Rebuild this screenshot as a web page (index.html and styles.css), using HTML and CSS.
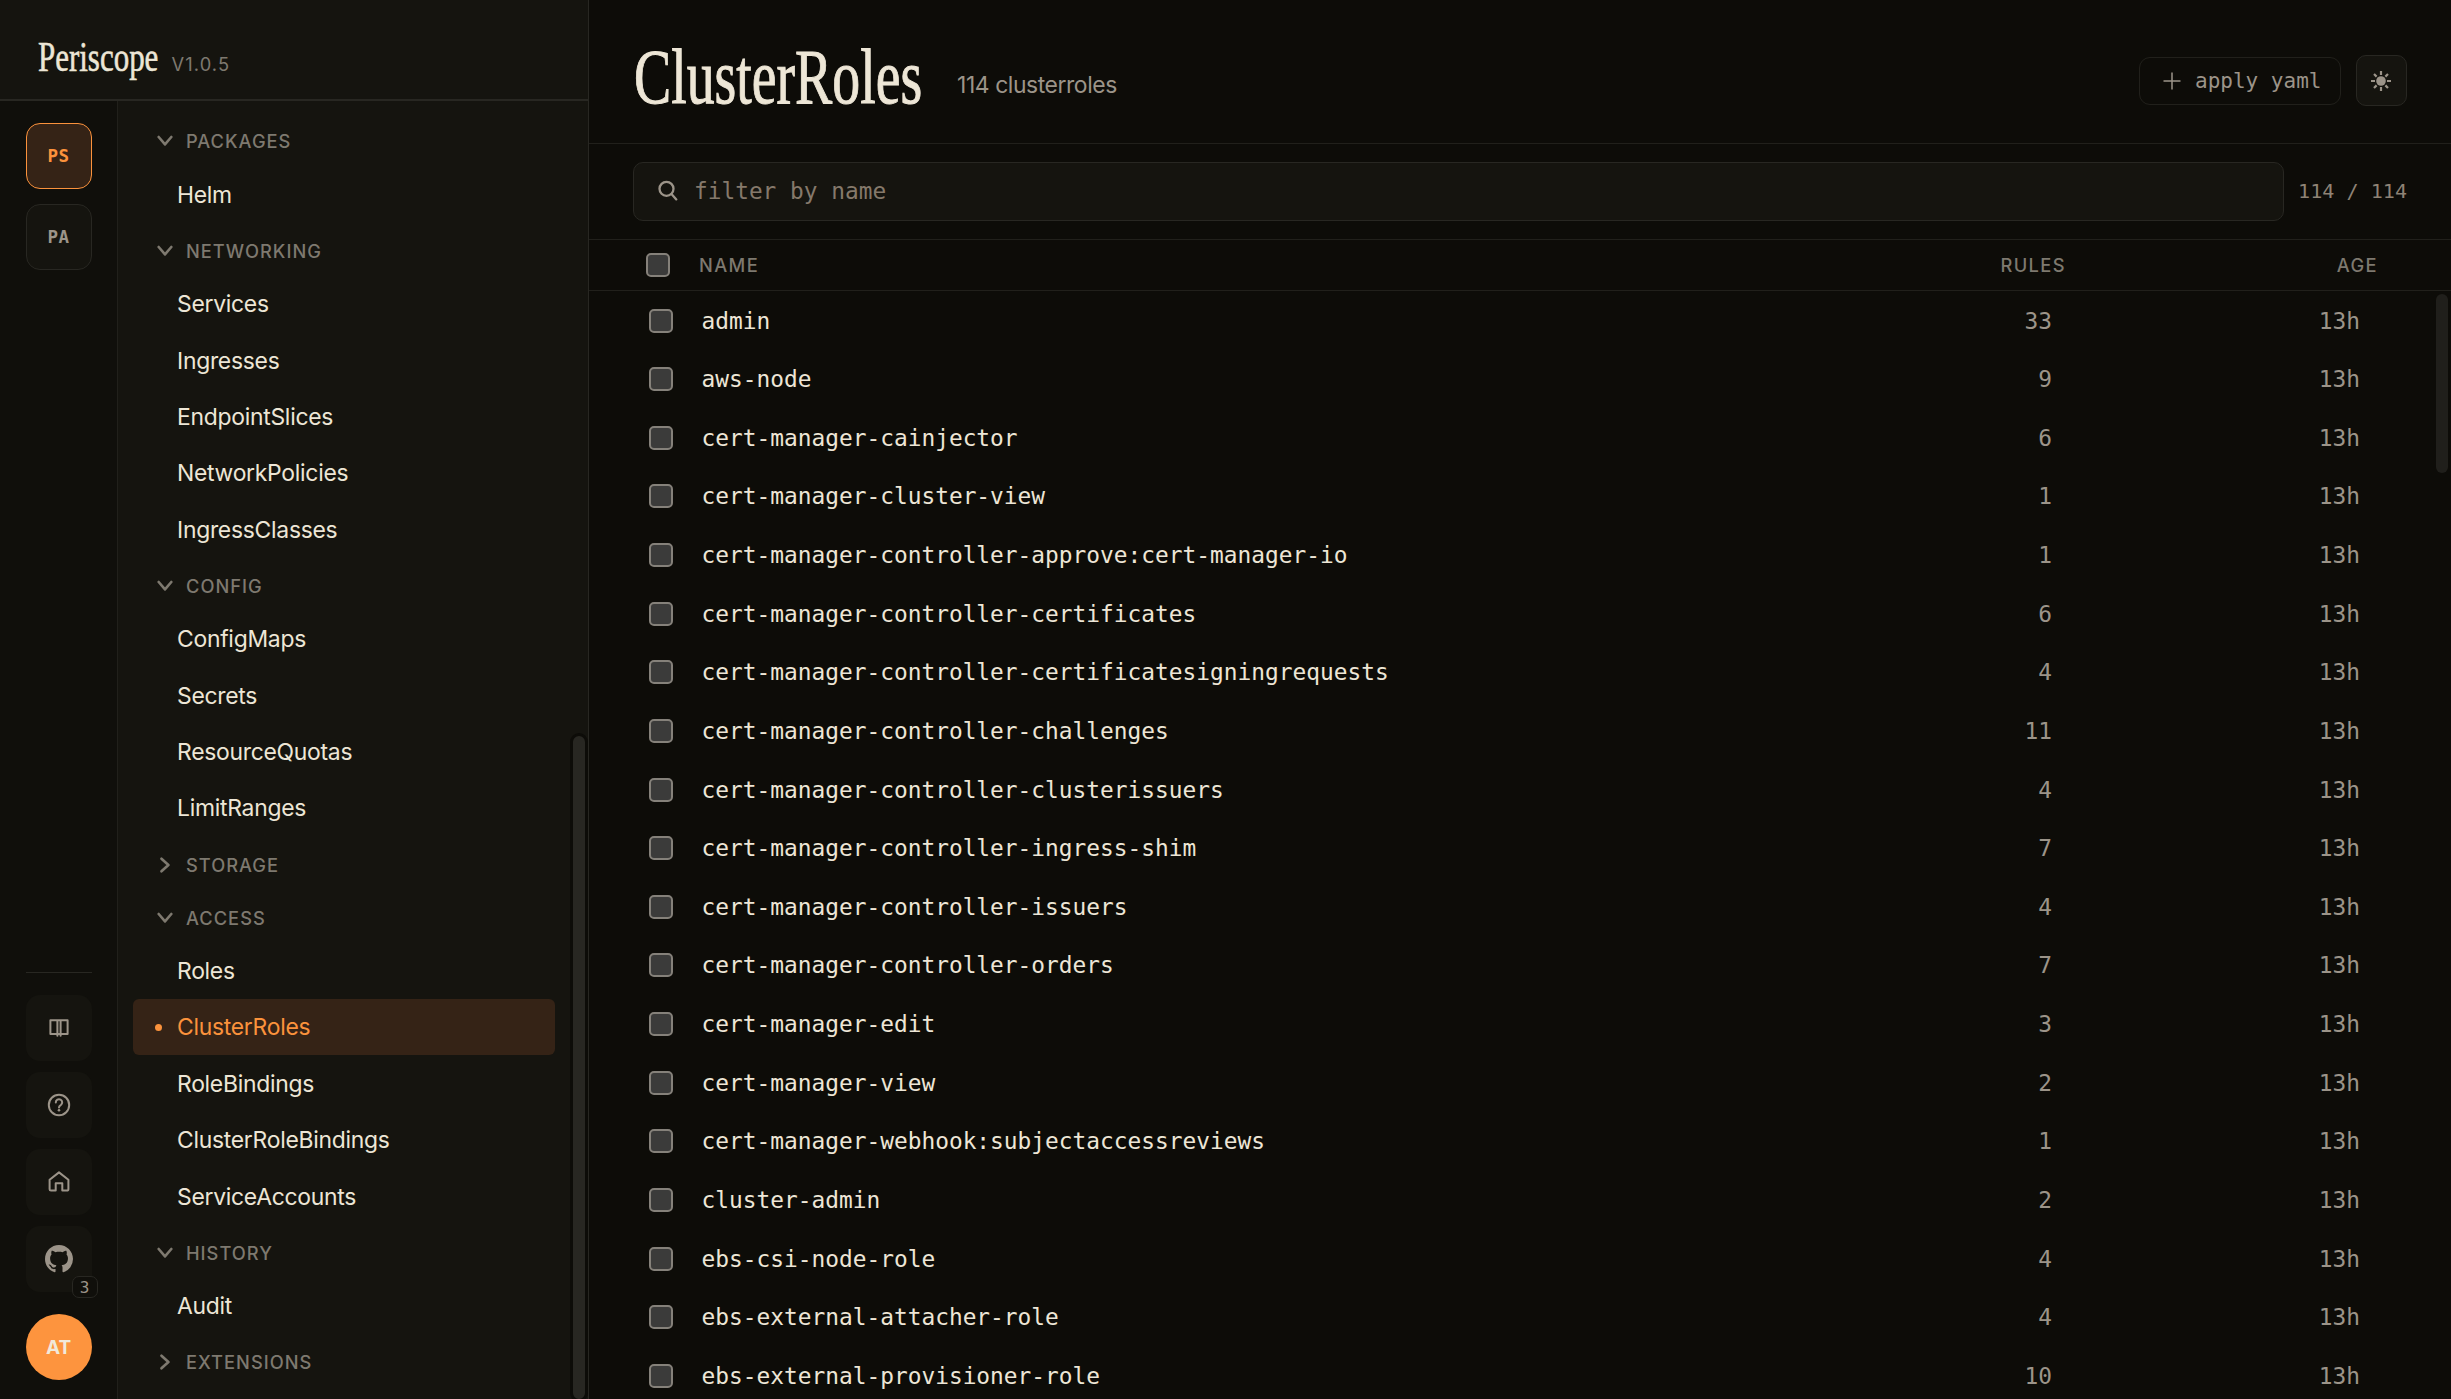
FILE: index.html
```html
<!DOCTYPE html>
<html lang="en">
<head>
<meta charset="utf-8">
<title>Periscope – ClusterRoles</title>
<link rel="stylesheet" href="styles.css">
</head>
<body>
<svg class="sprite" aria-hidden="true">
  <symbol id="down" viewBox="0 0 16 16"><path d="M1.700 4 8 11.400 14.300 4"/></symbol>
  <symbol id="right" viewBox="0 0 16 16"><path d="M4.500 1.700 11.400 8 4.500 14.300"/></symbol>
</svg>
<div class="app">
  <aside class="sidebar">
    <header class="brand">
      <span class="brand-name"><span class="condensed">Periscope</span></span>
      <span class="version">V1.0.5</span>
    </header>
    <div class="side-body">
      <div class="rail">
        <button class="tile tile-active">PS</button>
        <button class="tile">PA</button>
        <div class="rail-foot">
          <hr class="rule">
          <button class="tile tool">
            <svg width="24" height="24" viewBox="0 0 24 24"><path d="M3.400 4.200h17.200v13.800h-17.200zM10.400 4.200v15.600M13.600 4.200v15.600"/></svg>
          </button>
          <button class="tile tool">
            <svg width="24" height="24" viewBox="0 0 24 24"><circle cx="12" cy="12" r="10.200"/><path d="M8.800 9.400a3.200 3.200 0 1 1 4.900 2.700c-1.200.7-1.700 1.200-1.700 2.500"/><circle class="solid" cx="12" cy="17.200" r="1.300"/></svg>
          </button>
          <button class="tile tool">
            <svg width="24" height="24" viewBox="0 0 24 24"><path d="M2.600 9.800 12 2.400l9.400 7.400v9.400a1.400 1.400 0 0 1-1.400 1.400h-4.700v-7.300H8.700v7.300H4a1.400 1.400 0 0 1-1.400-1.400z"/></svg>
          </button>
          <button class="tile tool">
            <svg class="github" width="28" height="28" viewBox="0 0 16 16"><path d="M8 0C3.580 0 0 3.580 0 8c0 3.540 2.290 6.530 5.470 7.590.4.070.55-.17.55-.38 0-.19-.01-.82-.01-1.490-2.010.37-2.530-.49-2.690-.94-.09-.23-.48-.94-.82-1.130-.28-.15-.68-.52-.01-.53.63-.01 1.080.58 1.230.82.72 1.210 1.870.87 2.330.66.07-.52.28-.87.51-1.070-1.780-.2-3.640-.89-3.640-3.950 0-.87.31-1.590.82-2.150-.08-.2-.36-1.020.08-2.120 0 0 .67-.21 2.200.82.64-.18 1.320-.27 2-.27s1.360.09 2 .27c1.530-1.040 2.200-.82 2.200-.82.44 1.100.16 1.920.08 2.120.51.56.82 1.270.82 2.150 0 3.070-1.870 3.750-3.650 3.950.29.25.54.73.54 1.480 0 1.070-.01 1.930-.01 2.200 0 .21.15.46.55.38A8.010 8.010 0 0 0 16 8c0-4.420-3.580-8-8-8z"/></svg>
            <span class="badge">3</span>
          </button>
          <div class="avatar">AT</div>
        </div>
      </div>
      <nav class="nav">
        <section>
          <h2><svg><use href="#down"/></svg>PACKAGES</h2>
          <a>Helm</a>
        </section>
        <section>
          <h2><svg><use href="#down"/></svg>NETWORKING</h2>
          <a>Services</a><a>Ingresses</a><a>EndpointSlices</a><a>NetworkPolicies</a><a>IngressClasses</a>
        </section>
        <section>
          <h2><svg><use href="#down"/></svg>CONFIG</h2>
          <a>ConfigMaps</a><a>Secrets</a><a>ResourceQuotas</a><a>LimitRanges</a>
        </section>
        <section>
          <h2><svg><use href="#right"/></svg>STORAGE</h2>
        </section>
        <section>
          <h2><svg><use href="#down"/></svg>ACCESS</h2>
          <a>Roles</a><a class="current">ClusterRoles</a><a>RoleBindings</a><a>ClusterRoleBindings</a><a>ServiceAccounts</a>
        </section>
        <section>
          <h2><svg><use href="#down"/></svg>HISTORY</h2>
          <a>Audit</a>
        </section>
        <section>
          <h2><svg><use href="#right"/></svg>EXTENSIONS</h2>
        </section>
        <div class="nav-thumb"></div>
      </nav>
    </div>
  </aside>

  <main class="main">
    <header class="page-head">
      <h1><span class="condensed">ClusterRoles</span></h1>
      <span class="count">114 clusterroles</span>
      <div class="actions">
        <button class="apply"><svg width="18" height="18" viewBox="0 0 18 18"><path d="M9 .5v17M.5 9h17"/></svg>apply yaml</button>
        <button class="theme"><svg width="22" height="22" viewBox="0 0 22 22"><circle cx="11" cy="11" r="4.800"/><path d="M11 1v4M11 17v4M1 11h4M17 11h4M4 4l2.600 2.600M15.400 15.400 18 18M4 18l2.600-2.600M15.400 6.600 18 4"/></svg></button>
      </div>
    </header>
    <div class="filter">
      <div class="search"><svg width="20" height="22" viewBox="0 0 20 22"><circle cx="8.500" cy="8.800" r="7"/><path d="M13.500 14l4.800 5.400"/></svg><span>filter by name</span></div>
      <span class="ratio">114 / 114</span>
    </div>
    <div class="thead">
      <i class="box"></i><span class="name">NAME</span><span class="rules">RULES</span><span class="age">AGE</span>
    </div>
    <div class="rows">
      <div class="row"><i class="box"></i><span class="name">admin</span><span class="rules">33</span><span class="age">13h</span></div>
      <div class="row"><i class="box"></i><span class="name">aws-node</span><span class="rules">9</span><span class="age">13h</span></div>
      <div class="row"><i class="box"></i><span class="name">cert-manager-cainjector</span><span class="rules">6</span><span class="age">13h</span></div>
      <div class="row"><i class="box"></i><span class="name">cert-manager-cluster-view</span><span class="rules">1</span><span class="age">13h</span></div>
      <div class="row"><i class="box"></i><span class="name">cert-manager-controller-approve:cert-manager-io</span><span class="rules">1</span><span class="age">13h</span></div>
      <div class="row"><i class="box"></i><span class="name">cert-manager-controller-certificates</span><span class="rules">6</span><span class="age">13h</span></div>
      <div class="row"><i class="box"></i><span class="name">cert-manager-controller-certificatesigningrequests</span><span class="rules">4</span><span class="age">13h</span></div>
      <div class="row"><i class="box"></i><span class="name">cert-manager-controller-challenges</span><span class="rules">11</span><span class="age">13h</span></div>
      <div class="row"><i class="box"></i><span class="name">cert-manager-controller-clusterissuers</span><span class="rules">4</span><span class="age">13h</span></div>
      <div class="row"><i class="box"></i><span class="name">cert-manager-controller-ingress-shim</span><span class="rules">7</span><span class="age">13h</span></div>
      <div class="row"><i class="box"></i><span class="name">cert-manager-controller-issuers</span><span class="rules">4</span><span class="age">13h</span></div>
      <div class="row"><i class="box"></i><span class="name">cert-manager-controller-orders</span><span class="rules">7</span><span class="age">13h</span></div>
      <div class="row"><i class="box"></i><span class="name">cert-manager-edit</span><span class="rules">3</span><span class="age">13h</span></div>
      <div class="row"><i class="box"></i><span class="name">cert-manager-view</span><span class="rules">2</span><span class="age">13h</span></div>
      <div class="row"><i class="box"></i><span class="name">cert-manager-webhook:subjectaccessreviews</span><span class="rules">1</span><span class="age">13h</span></div>
      <div class="row"><i class="box"></i><span class="name">cluster-admin</span><span class="rules">2</span><span class="age">13h</span></div>
      <div class="row"><i class="box"></i><span class="name">ebs-csi-node-role</span><span class="rules">4</span><span class="age">13h</span></div>
      <div class="row"><i class="box"></i><span class="name">ebs-external-attacher-role</span><span class="rules">4</span><span class="age">13h</span></div>
      <div class="row"><i class="box"></i><span class="name">ebs-external-provisioner-role</span><span class="rules">10</span><span class="age">13h</span></div>
      <div class="rows-thumb"></div>
    </div>
  </main>
</div>
</body>
</html>
```
FILE: styles.css
```css
:root {
  --bg: #0d0c08;
  --panel: #15140f;
  --rail: #100f0b;
  --line: #21201b;
  --line-strong: #282722;
  --text: #ede6d6;
  --muted: #9c9489;
  --faint: #7e796f;
  --accent: #fb923c;
  --sans: "Inter", "Liberation Sans", sans-serif;
  --mono: "DejaVu Sans Mono", "Liberation Mono", monospace;
  --serif: "Liberation Serif", serif;
}
* { box-sizing: border-box; }
body { margin: 0; background: var(--bg); color: var(--text); font-family: var(--sans); overflow: hidden; }
button { font: inherit; color: inherit; padding: 0; margin: 0; }
svg { display: block; fill: none; stroke: currentColor; flex: none; }
.sprite { display: none; }
.app { display: flex; width: 100vw; height: 100vh; }
.condensed { display: inline-block; transform-origin: 0 50%; white-space: nowrap; }

/* sidebar */
.sidebar { width: 589px; flex: none; display: flex; flex-direction: column; background: var(--panel); border-right: 1px solid var(--line-strong); }
.brand { height: 101px; flex: none; display: flex; align-items: baseline; padding: 32px 0 0 38px; border-bottom: 2px solid var(--line-strong); }
.brand-name { width: 133.500px; font: 43px/50px var(--serif); }
.brand-name .condensed { transform: scaleX(.72); -webkit-text-stroke: .6px currentColor; }
.version { color: var(--faint); font-size: 18.300px; letter-spacing: 1.100px; }
.side-body { flex: 1; min-height: 0; display: flex; }
.rail { width: 118px; flex: none; display: flex; flex-direction: column; align-items: center; gap: 15px; padding: 22px 0 19px; background: var(--rail); border-right: 1px solid var(--line); }
.tile { position: relative; width: 66px; height: 66px; flex: none; display: flex; align-items: center; justify-content: center; border: 1px solid var(--line-strong); border-radius: 14px; background: var(--panel); color: var(--muted); font: bold 17.500px var(--mono); letter-spacing: .4px; }
.tile-active { background: #352316; border-color: var(--accent); color: var(--accent); }
.rail-foot { margin-top: auto; display: flex; flex-direction: column; gap: 11px; }
.rule { width: 66px; height: 1px; margin: 0 0 11px; border: 0; background: var(--line-strong); }
.tool { border-color: transparent; background-clip: border-box; }
.tool svg { stroke-width: 2; stroke-linejoin: round; stroke-linecap: round; }
.tool svg .solid, .tool .github { fill: currentColor; stroke: none; }
.badge { position: absolute; right: -7px; bottom: -7px; width: 26px; height: 22px; display: flex; align-items: center; justify-content: center; border: 1px solid var(--line-strong); border-radius: 7px; background: var(--rail); font: 16px var(--mono); color: var(--muted); letter-spacing: 0; }
.avatar { width: 66px; height: 66px; margin-top: 11px; display: flex; align-items: center; justify-content: center; border-radius: 50%; background: #fd943e; color: #f1e9da; font-size: 19px; font-weight: 700; }

.nav { position: relative; flex: 1; min-width: 0; overflow: hidden; padding: 16.400px 33px 0 15px; }
.nav section { margin-bottom: 4.600px; }
.nav h2 { height: 48.500px; margin: 0; padding: 0 0 .5px 24px; display: flex; align-items: center; gap: 13px; color: var(--faint); font-size: 18.300px; font-weight: 500; letter-spacing: 1px; }
.nav h2 svg { width: 16px; height: 16px; stroke-width: 2.600; stroke-linecap: round; stroke-linejoin: round; }
.nav a { position: relative; height: 56.400px; padding: 1.400px 0 0 44px; display: flex; align-items: center; border-radius: 6px; font-size: 22.900px; letter-spacing: -.27px; }
.nav .current { background: #352316; color: var(--accent); }
.nav .current::before { content: ""; position: absolute; left: 22px; width: 7px; height: 7px; border-radius: 50%; background: var(--accent); }
.nav-thumb { position: absolute; right: 0; top: 632px; bottom: -3px; width: 18px; border: 3px solid var(--bg); border-radius: 9px; background: var(--line-strong); }

/* main */
.main { flex: 1; min-width: 0; display: flex; flex-direction: column; }
.page-head { height: 144px; flex: none; display: flex; align-items: center; padding: 0 44px; border-bottom: 1px solid var(--line); }
.page-head h1 { width: 324px; margin: 10px 0 0; font: 79px/90px var(--serif); }
.page-head .condensed { transform: translateX(1px) scaleX(.706); -webkit-text-stroke: 1px currentColor; }
.count { margin-top: 27px; color: var(--muted); font-size: 22.900px; letter-spacing: -.42px; }
.actions { margin: 18px 0 0 auto; display: flex; align-items: center; gap: 15px; }
.apply { width: 202px; height: 48px; display: flex; align-items: center; gap: 14px; padding-left: 23px; border: 1px solid var(--line); border-radius: 11px; background: none; color: var(--muted); font: 21px var(--mono); }
.apply svg { stroke-width: 1.500; }
.theme { width: 51px; height: 51px; display: flex; align-items: center; justify-content: center; padding-right: 1px; border: 1px solid var(--line-strong); border-radius: 10px; background: var(--panel); color: var(--muted); }
.theme svg { stroke-width: 2.200; }
.theme circle { fill: currentColor; stroke: none; }
.filter { height: 96px; flex: none; display: flex; align-items: center; gap: 14px; padding: 0 44px; border-bottom: 1px solid var(--line); }
.search { flex: 1; height: 59px; display: flex; align-items: center; gap: 16px; padding: 0 0 1px 24px; border: 1px solid var(--line-strong); border-radius: 10px; background: var(--panel); color: #85796b; font: 22.800px var(--mono); }
.search svg { stroke-width: 2.300; stroke-linecap: round; color: var(--muted); }
.ratio { margin-top: -2px; color: #8e8375; font: 20.100px var(--mono); }
.thead, .row { display: grid; align-items: center; }
.thead { grid-template-columns: 24px 1fr 120px 312px; height: 51px; flex: none; padding: 0 73px 0 57px; border-bottom: 1px solid var(--line); color: var(--faint); font-size: 18.300px; font-weight: 500; letter-spacing: 1.400px; }
.row { grid-template-columns: 24px 1fr 120px 308px; height: 58.630px; padding: .6px 91px 0 60px; font: 22.830px var(--mono); }
.name { padding-left: 28.500px; }
.thead .name { padding-left: 29px; }
.rules, .age { text-align: right; }
.row .rules, .row .age { color: var(--muted); }
.box { width: 24px; height: 24px; border: 2px solid #85817a; border-radius: 5px; background: #3b3b3a; }
.rows { position: relative; flex: 1; min-height: 0; overflow: hidden; }
.rows-thumb { position: absolute; right: 3px; top: 3px; width: 12px; height: 179px; border-radius: 6px; background: #201f1b; }
```
